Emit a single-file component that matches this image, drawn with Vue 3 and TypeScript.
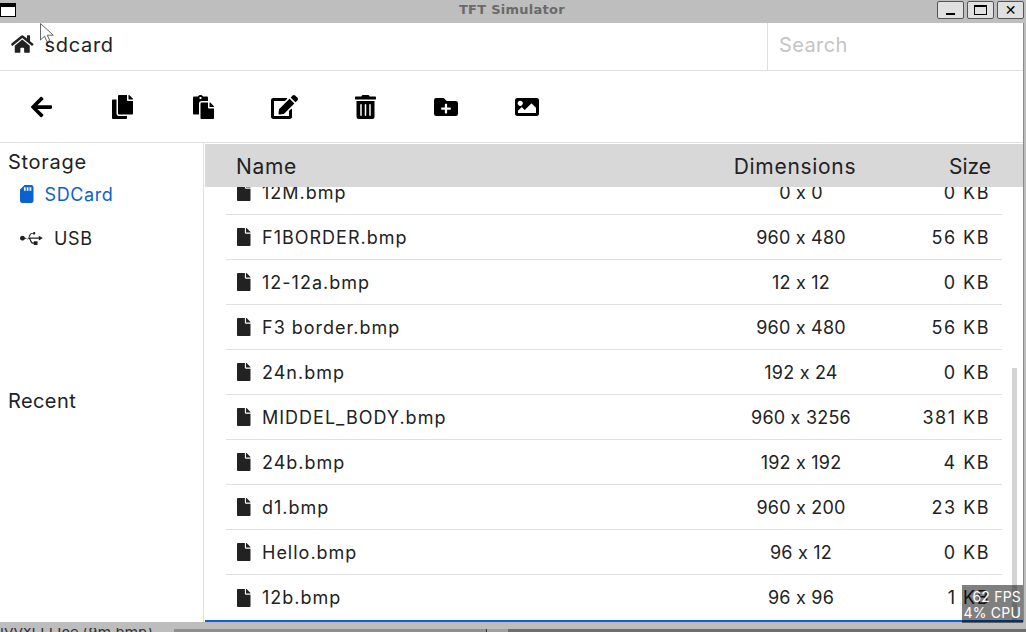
<script setup lang="ts">
interface FileRow { name: string; dim: string; size: string }
const rows: FileRow[] = [
  { name: '12M.bmp', dim: '0 x 0', size: '0 KB' },
  { name: 'F1BORDER.bmp', dim: '960 x 480', size: '56 KB' },
  { name: '12-12a.bmp', dim: '12 x 12', size: '0 KB' },
  { name: 'F3 border.bmp', dim: '960 x 480', size: '56 KB' },
  { name: '24n.bmp', dim: '192 x 24', size: '0 KB' },
  { name: 'MIDDEL_BODY.bmp', dim: '960 x 3256', size: '381 KB' },
  { name: '24b.bmp', dim: '192 x 192', size: '4 KB' },
  { name: 'd1.bmp', dim: '960 x 200', size: '23 KB' },
  { name: 'Hello.bmp', dim: '96 x 12', size: '0 KB' },
  { name: '12b.bmp', dim: '96 x 96', size: '1 KB' },
]
const tools = [
  { w: 448, d: 'M257.5 445.1l-22.2 22.2c-9.4 9.4-24.6 9.4-33.9 0L7 273c-9.4-9.4-9.4-24.6 0-33.9L201.4 44.7c9.4-9.4 24.6-9.4 33.9 0l22.2 22.2c9.5 9.5 9.3 25-.4 34.3L136.6 216H424c13.3 0 24 10.7 24 24v32c0 13.3-10.7 24-24 24H136.6l120.5 114.8c9.8 9.3 10 24.8.4 34.3z' },
  { w: 448, d: 'M320 448v40c0 13.255-10.745 24-24 24H24c-13.255 0-24-10.745-24-24V120c0-13.255 10.745-24 24-24h72v296c0 30.879 25.121 56 56 56h168zm0-344V0H152c-13.255 0-24 10.745-24 24v368c0 13.255 10.745 24 24 24h272c13.255 0 24-10.745 24-24V128H344c-13.2 0-24-10.8-24-24zm120.971-31.029L375.029 7.029A24 24 0 0 0 358.059 0H352v96h96v-6.059a24 24 0 0 0-7.029-16.97z' },
  { w: 448, d: 'M128 184c0-30.879 25.122-56 56-56h136V56c0-13.255-10.745-24-24-24h-80.61C204.306 12.89 183.637 0 160 0s-44.306 12.89-55.39 32H24C10.745 32 0 42.745 0 56v336c0 13.255 10.745 24 24 24h104V184zm32-144c13.255 0 24 10.745 24 24s-10.745 24-24 24-24-10.745-24-24 10.745-24 24-24zm184 248h104v200c0 13.255-10.745 24-24 24H184c-13.255 0-24-10.745-24-24V184c0-13.255 10.745-24 24-24h136v104c0 13.2 10.8 24 24 24zm104-38.059V256h-96v-96h6.059a24 24 0 0 1 16.97 7.029l65.941 65.941a24.002 24.002 0 0 1 7.03 16.971z' },
  { w: 576, d: 'M402.6 83.2l90.2 90.2c3.8 3.8 3.8 10 0 13.8L274.4 405.6l-92.8 10.3c-12.4 1.4-22.9-9.1-21.5-21.5l10.3-92.8L388.8 83.2c3.8-3.8 10-3.8 13.8 0zm162-22.9l-48.8-48.8c-15.2-15.2-39.9-15.2-55.2 0l-35.4 35.4c-3.8 3.8-3.8 10 0 13.8l90.2 90.2c3.8 3.8 10 3.8 13.8 0l35.4-35.4c15.2-15.3 15.2-40 0-55.2zM384 346.2V448H64V128h229.8c3.2 0 6.2-1.3 8.5-3.5l40-40c7.6-7.6 2.2-20.5-8.5-20.5H48C21.5 64 0 85.5 0 112v352c0 26.5 21.5 48 48 48h352c26.5 0 48-21.5 48-48V306.2c0-10.7-12.9-16-20.5-8.5l-40 40c-2.2 2.3-3.5 5.3-3.5 8.5z' },
  { w: 448, d: 'M32 464a48 48 0 0 0 48 48h288a48 48 0 0 0 48-48V128H32zm272-256a16 16 0 0 1 32 0v224a16 16 0 0 1-32 0zm-96 0a16 16 0 0 1 32 0v224a16 16 0 0 1-32 0zm-96 0a16 16 0 0 1 32 0v224a16 16 0 0 1-32 0zM432 32H312l-9.4-18.7A24 24 0 0 0 281.1 0H166.8a23.72 23.72 0 0 0-21.4 13.3L136 32H16A16 16 0 0 0 0 48v32a16 16 0 0 0 16 16h416a16 16 0 0 0 16-16V48a16 16 0 0 0-16-16z' },
  { w: 512, d: 'M464,128H272L208,64H48A48,48,0,0,0,0,112V400a48,48,0,0,0,48,48H464a48,48,0,0,0,48-48V176A48,48,0,0,0,464,128ZM359.5,296a16,16,0,0,1-16,16h-64v64a16,16,0,0,1-16,16h-16a16,16,0,0,1-16-16V312h-64a16,16,0,0,1-16-16V280a16,16,0,0,1,16-16h64V200a16,16,0,0,1,16-16h16a16,16,0,0,1,16,16v64h64a16,16,0,0,1,16,16Z' },
  { w: 512, d: 'M464 448H48c-26.51 0-48-21.49-48-48V112c0-26.51 21.49-48 48-48h416c26.51 0 48 21.49 48 48v288c0 26.51-21.49 48-48 48zM112 120c-30.928 0-56 25.072-56 56s25.072 56 56 56 56-25.072 56-56-25.072-56-56-56zM64 384h384V272l-87.515-87.515c-4.686-4.686-12.284-4.686-16.971 0L208 320l-55.515-55.515c-4.686-4.686-12.284-4.686-16.971 0L64 336v48z' },
]
const iconBox = (w: number) => `0 0 ${w} 512`
const iconWidth = (w: number) => (w / 512) * 24
</script>

<template>
  <div class="screen">
    <header class="titlebar">
      <span class="menu-btn"></span>
      <span class="title">TFT Simulator</span>
      <div class="win-btns">
        <button class="win-btn"><span class="g-min"></span></button>
        <button class="win-btn"><span class="g-max"></span></button>
        <button class="win-btn g-close">✕</button>
      </div>
    </header>

    <div class="window">
      <div class="app">
        <div class="pathbar">
          <svg class="home" viewBox="0 0 576 512"><path d="M280.37 148.26L96 300.11V464a16 16 0 0 0 16 16l112.06-.29a16 16 0 0 0 15.92-16V368a16 16 0 0 1 16-16h64a16 16 0 0 1 16 16v95.64a16 16 0 0 0 16 16.05L464 480a16 16 0 0 0 16-16V300L295.67 148.26a12.19 12.19 0 0 0-15.3 0zM571.6 251.47L488 182.56V44.05a12 12 0 0 0-12-12h-56a12 12 0 0 0-12 12v72.61L318.47 43a48 48 0 0 0-61 0L4.34 251.47a12 12 0 0 0-1.6 16.9l25.5 31A12 12 0 0 0 45.15 301l235.22-193.74a12.19 12.19 0 0 1 15.3 0L530.9 301a12 12 0 0 0 16.9-1.6l25.5-31a12 12 0 0 0-1.7-16.93z"/></svg>
          <span class="path">sdcard</span>
          <div class="search">Search</div>
        </div>

        <div class="toolbar">
          <div v-for="(t, i) in tools" :key="i" class="tool">
            <svg :viewBox="iconBox(t.w)" :width="iconWidth(t.w)" height="24"><path :d="t.d"/></svg>
          </div>
        </div>

        <div class="body">
          <aside class="sidebar">
            <section class="side-sec">
              <h3 class="side-title">Storage</h3>
              <div class="side-item active">
                <svg class="sd" viewBox="0 0 384 512"><path d="M320 0H128L0 128v320c0 35.3 28.7 64 64 64h256c35.3 0 64-28.7 64-64V64c0-35.3-28.7-64-64-64zM160 160h-48V64h48v96zm80 0h-48V64h48v96zm80 0h-48V64h48v96z"/></svg>
                <span>SDCard</span>
              </div>
              <div class="side-item usb-item">
                <svg class="usb" viewBox="0 0 640 512"><path d="M641.5 256c0 3.1-1.7 6.1-4.5 7.5L547.9 317c-1.4.8-2.8 1.4-4.5 1.4-1.4 0-3.1-.3-4.5-1.1-2.8-1.7-4.5-4.5-4.5-7.8v-35.6H295.7c25.3 39.6 40.5 106.9 69.6 106.9H392V354c0-5 3.9-8.9 8.9-8.9H490c5 0 8.9 3.9 8.9 8.9v89.1c0 5-3.9 8.9-8.9 8.9h-89.1c-5 0-8.9-3.9-8.9-8.9v-26.7h-26.7c-75.4 0-81.1-142.5-124.7-142.5H140.3c-8.1 30.6-35.9 53.5-69 53.5C32 334.5 0 302.5 0 263.2s32-71.3 71.3-71.3c33.1 0 61 22.8 69 53.5 39.1 0 43.9 9.5 74.6 60.4C255 240.9 257.1 112 338.4 112h29c4.1-14.7 17.5-25.1 33.5-25.1 19.700 0 35.600 15.900 35.600 35.600 0 19.700-15.900 35.600-35.600 35.600-16 0-29.400-10.500-33.500-25.100h-29c-28.400 0-38.300 57-77.800 106H534v-35.600c0-3.300 1.700-6.100 4.500-7.800 2.800-1.700 6.400-1.400 8.900.3l89.100 53.500c2.800 1.100 4.500 4.100 4.500 7.200z"/></svg>
                <span>USB</span>
              </div>
            </section>
            <section class="side-sec">
              <h3 class="side-title recent">Recent</h3>
            </section>
          </aside>

          <main class="main">
            <div class="thead">
              <span class="c-name">Name</span>
              <span class="c-dim">Dimensions</span>
              <span class="c-size">Size</span>
            </div>
            <div class="list">
              <div class="rows">
                <div v-for="r in rows" :key="r.name" class="row">
                  <span class="c-name">
                    <svg class="file" viewBox="0 0 384 512"><path d="M224 136V0H24C10.7 0 0 10.7 0 24v464c0 13.3 10.700 24 24 24h336c13.300 0 24-10.700 24-24V160H248c-13.200 0-24-10.800-24-24zm160-14.100v6.100H256V0h6.100c6.400 0 12.500 2.500 17 7l97.900 98c4.500 4.500 7 10.600 7 16.900z"/></svg>{{ r.name }}
                  </span>
                  <span class="c-dim">{{ r.dim }}</span>
                  <span class="c-size">{{ r.size }}</span>
                </div>
              </div>
              <div class="scroll"></div>
            </div>
          </main>
        </div>
      </div>
      <div class="perf">62 FPS<br />4% CPU</div>
    </div>

    <div class="desk">
      <span class="desk-text">lVVYI I I Joe (9m.bmp)</span>
      <span class="desk-a"></span>
      <span class="desk-b"></span>
      <span class="desk-c"></span>
    </div>

    <svg class="cursor" viewBox="0 0 15 20" width="15" height="20">
      <path d="M.5.5v16.500l4-3.800 2.500 5.600 2.800-1.200-2.500-5.400h6z" fill="#fff" fill-opacity=".85" stroke="#666" stroke-width="1"/>
    </svg>
  </div>
</template>

<style>
html, body { margin: 0; padding: 0; background: #bdbdbd; overflow: hidden; }
</style>

<style scoped>
.screen {
  width: 1026px;
  height: 632px;
  position: relative;
  display: flex;
  flex-direction: column;
  overflow: hidden;
  background: #bdbdbd;
  font-family: "Inter", "Liberation Sans", sans-serif;
  font-feature-settings: "calt" 0;
  color: #222;
}
.cursor { position: absolute; left: 40px; top: 23px; z-index: 5; }
.titlebar {
  height: 23px;
  flex: none;
  position: relative;
  display: flex;
  align-items: flex-start;
  background: #bebebe;
}
.menu-btn {
  width: 16px;
  height: 14px;
  margin-top: 3px;
  border: 1px solid #000;
  border-top-width: 4px;
  background: #fff;
  box-sizing: border-box;
}
.title {
  position: absolute;
  left: 459px;
  top: 0;
  font: bold 13px/19px "DejaVu Sans", sans-serif;
  letter-spacing: 0.25px;
  color: #6a6a6a;
}
.win-btns {
  margin-left: auto;
  display: flex;
  gap: 3px;
  margin-top: 1px;
  margin-right: 2px;
}
.win-btn {
  width: 27px;
  height: 18px;
  padding: 0;
  box-sizing: border-box;
  background: #e0e0e0;
  border: 1px solid #555;
  border-radius: 2px;
  display: flex;
  align-items: center;
  justify-content: center;
  color: #000;
}
.g-min { width: 9px; height: 2px; background: #000; margin-top: 8px; }
.g-max { width: 11px; height: 7px; border: 1px solid #000; border-top-width: 2px; box-sizing: content-box; }
.g-close { font: bold 14px/1 "DejaVu Sans", sans-serif; }

.window { height: 599px; flex: none; position: relative; }
.app {
  width: 1024px;
  height: 599px;
  box-sizing: border-box;
  border-right: 1px solid #8a8a8a;
  background: #fff;
  display: flex;
  flex-direction: column;
}
.pathbar {
  height: 47px;
  flex: none;
  display: flex;
  align-items: center;
  border-bottom: 1px solid #e0e0e0;
  padding-left: 11px;
}
.home { width: 22.500px; height: 20px; fill: #222; margin-bottom: 5px; }
.path { margin-left: 11px; font-size: 20px; letter-spacing: 0.7px; margin-bottom: 4px; }
.search {
  margin-left: auto;
  width: 256px;
  height: 100%;
  box-sizing: border-box;
  border-left: 1px solid #e0e0e0;
  padding: 0 0 4px 11px;
  display: flex;
  align-items: center;
  font-size: 20px;
  letter-spacing: 0.4px;
  color: #c4c4c4;
}
.toolbar {
  height: 71px;
  flex: none;
  display: flex;
  padding-left: 1px;
  border-bottom: 1px solid #e0e0e0;
}
.tool { width: 81px; display: flex; align-items: center; justify-content: center; }
.tool svg { fill: #000; }
.tool:nth-child(n+6) svg { margin-left: -2px; }
.body { flex: 1; display: flex; min-height: 0; }
.sidebar {
  width: 204px;
  flex: none;
  box-sizing: border-box;
  border-right: 1px solid #e0e0e0;
  display: flex;
  flex-direction: column;
}
.side-sec { flex: 1; }
.side-title {
  margin: 0;
  padding: 7px 0 0 8px;
  height: 38px;
  box-sizing: border-box;
  font-size: 20px;
  font-weight: 400;
  line-height: 24px;
  letter-spacing: 0.7px;
}
.side-title.recent { letter-spacing: 0.4px; margin-top: -1px; }
.side-item {
  height: 26px;
  display: flex;
  align-items: center;
  padding-left: 20px;
  font-size: 18px;
  letter-spacing: 0.6px;
}
.side-item.active { color: #0a62d0; }
.usb-item { margin-top: 10px; height: 42px; }
.sd { width: 13.500px; height: 18px; fill: #0a62d0; margin-right: 11px; }
.usb { width: 22.500px; height: 18px; fill: #222; margin-right: 11.500px; }
.main { flex: 1; min-width: 0; padding: 1px 0 0 1px; display: flex; flex-direction: column; position: relative; }
.thead {
  height: 43px;
  box-sizing: border-box;
  padding: 1px 32px 0 21px;
  flex: none;
  display: flex;
  align-items: center;
  background: #d8d8d8;
  font-size: 21px;
  letter-spacing: 0.7px;
  position: relative;
  z-index: 1;
}
.thead .c-name { padding-left: 10px; }
.thead .c-dim { margin-right: 35px; }
.thead .c-size { width: 56px; letter-spacing: 0; }
.c-name { flex: 1; display: flex; align-items: center; min-width: 0; white-space: pre; }
.c-dim { width: 210px; text-align: center; white-space: nowrap; }
.c-size { width: 70px; text-align: right; white-space: nowrap; }
.list { flex: 1; min-height: 0; overflow: hidden; position: relative; border-bottom: 2px solid #0a62d0; }
.rows { margin: -17px 21px 0 21px; }
.row {
  height: 45px;
  box-sizing: border-box;
  border-bottom: 1px solid #e0e0e0;
  display: flex;
  align-items: center;
  font-size: 18px;
}
.row:last-child { border-bottom: 0; }
.row .c-name { letter-spacing: 1px; }
.row .c-dim { margin-right: 14px; letter-spacing: 0.2px; }
.row .c-size { margin-right: 12px; letter-spacing: 1.5px; }
.file { width: 13.500px; height: 18px; fill: #222; margin: 0 11.500px 0 11px; flex: none; }
.scroll {
  position: absolute;
  right: 6px;
  bottom: 0;
  width: 5px;
  height: 252px;
  background: #d4d4d4;
}
.perf {
  position: absolute;
  right: 3px;
  bottom: -1px;
  width: 61px;
  height: 38px;
  box-sizing: border-box;
  background: rgba(0, 0, 0, 0.5);
  color: #fff;
  font-size: 14px;
  line-height: 16px;
  letter-spacing: 0.2px;
  text-align: right;
  padding: 4px 2px 0 0;
  z-index: 2;
}
.desk { flex: 1; min-height: 0; display: flex; align-items: flex-end; overflow: hidden; }
.desk-text {
  width: 174px;
  height: 4px;
  flex: none;
  overflow: hidden;
  white-space: nowrap;
  font: 14px/8px "DejaVu Sans", sans-serif;
  color: #333;
}
.desk-a { width: 313px; height: 3px; background: #8f8f8f; border-right: 1px solid #333; flex: none; box-sizing: border-box; }
.desk-b { width: 21px; height: 3px; background: #a0a0a0; flex: none; }
.desk-c { flex: 1; height: 3px; background: #6e6e6e; }
</style>
